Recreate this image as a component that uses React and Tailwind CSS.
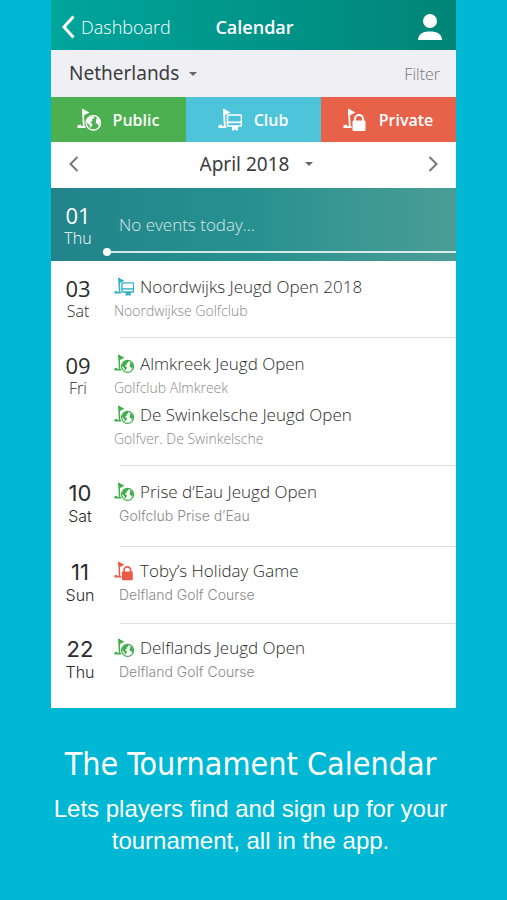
import { useState } from "react";

const EVENTS = [
  {
    date: "03",
    day: "Sat",
    padding: "py-[14px]",
    items: [{ type: "club", title: "Noordwijks Jeugd Open 2018", venue: "Noordwijkse Golfclub" }],
  },
  {
    date: "09",
    day: "Fri",
    padding: "py-[14px]",
    items: [
      { type: "public", title: "Almkreek Jeugd Open", venue: "Golfclub Almkreek" },
      { type: "public", title: "De Swinkelsche Jeugd Open", venue: "Golfver. De Swinkelsche" },
    ],
  },
  {
    date: "10",
    day: "Sat",
    padding: "pt-[14px] pb-[18px]",
    indent: true,
    items: [{ type: "public", title: "Prise d’Eau Jeugd Open", venue: "Golfclub Prise d’Eau" }],
  },
  {
    date: "11",
    day: "Sun",
    padding: "pt-3 pb-4",
    indent: true,
    items: [{ type: "private", title: "Toby’s Holiday Game", venue: "Delfland Golf Course" }],
  },
  {
    date: "22",
    day: "Thu",
    padding: "pt-3 pb-4",
    indent: true,
    items: [{ type: "public", title: "Delflands Jeugd Open", venue: "Delfland Golf Course" }],
  },
];

const iconColors = {
  public: "text-[#3fae49]",
  club: "text-[#35b0c6]",
  private: "text-[#ec5a47]",
};

const tabs = [
  { type: "public", label: "Public", className: "bg-[#4caf50]" },
  { type: "club", label: "Club", className: "bg-[#4dc4da]" },
  { type: "private", label: "Private", className: "bg-[#e8624a]" },
];

function EventIcon({ type, className }) {
  return (
    <svg viewBox="0 0 24 24" className={className} fill="none" stroke="currentColor" aria-hidden="true">
      <path d="M5 0.5L12.5 4.5L6.5 7.5Z" fill="currentColor" stroke="none" />
      <path d="M5.8 1L6.8 18.5" strokeWidth="1.8" />
      <path d="M0.5 18.2L4 17.5M0.5 19H8.5" strokeWidth="1.8" />
      {type === "public" && (
        <>
          <circle cx="16.3" cy="14.8" r="7.2" strokeWidth="1.4" />
          <path
            d="M10 12L12.5 9L16.5 8.2L17.5 9.8L15 11.5L15.5 13L13 14.2L15.5 16L15 18L13 20L12.5 17L9.6 14.5ZM20 9.5L22 11.5L23 15L21.5 18L20.5 16L18.8 15L19 12.5Z"
            fill="currentColor"
            stroke="none"
          />
        </>
      )}
      {type === "club" && (
        <>
          <rect x="9.5" y="7" width="14" height="11" rx="1" strokeWidth="1.7" />
          <path d="M9.5 14.3H23.5" strokeWidth="1.7" />
          <path d="M14 18H20V22.5H18.5L17 21.5L15.5 22.5H14Z" fill="currentColor" stroke="none" />
        </>
      )}
      {type === "private" && (
        <>
          <rect x="9.5" y="12.5" width="13" height="10.5" rx="1.2" fill="currentColor" stroke="none" />
          <path d="M12 13.5V11A4 4 0 0 1 20 11V13.5" strokeWidth="2" />
        </>
      )}
    </svg>
  );
}

function Caret() {
  return (
    <svg viewBox="0 0 8 4" className="w-2 h-1 shrink-0 text-[#666666]" aria-hidden="true">
      <path d="M0 0H8L4 4Z" fill="currentColor" />
    </svg>
  );
}

function DateLabel({ date, day, className }) {
  return (
    <div className={`w-[54px] shrink-0 text-center ${className}`}>
      <p className="text-[22px] leading-[26px]">{date}</p>
      <p className="text-base leading-5 font-light">{day}</p>
    </div>
  );
}

function EventRow({ group }) {
  return (
    <div className={`flex ${group.padding}`}>
      <DateLabel
        date={group.date}
        day={group.day}
        className={group.indent ? "pl-1 font-[Inter,sans-serif] text-[#2b2b2b]" : "text-[#2b2b2b]"}
      />
      <div className="flex flex-col gap-[3px] pl-[9px]">
        {group.items.map((item) => (
          <article key={item.title}>
            <h3 className="flex items-center gap-[6px] text-[17px] leading-6 font-light text-[#2b2b2b]">
              <EventIcon type={item.type} className={`size-5 shrink-0 ${iconColors[item.type]}`} />
              {item.title}
            </h3>
            <p
              className={
                group.indent
                  ? "pl-[5px] font-[Inter,sans-serif] text-sm leading-6 font-light text-[#888888]"
                  : "text-sm leading-6 font-light text-[#888888]"
              }
            >
              {item.venue}
            </p>
          </article>
        ))}
      </div>
    </div>
  );
}

export default function App() {
  const [country, setCountry] = useState("Netherlands");
  const [month, setMonth] = useState("April 2018");

  return (
    <div className="min-h-screen bg-[#00b8d4] font-['Open_Sans',sans-serif]">
      <main className="mx-[51px] bg-white">
        <header className="grid h-[50px] grid-cols-3 items-center bg-linear-to-r from-[#00a59c] to-[#008577] pt-1 pr-2 pl-[10px] text-lg text-white">
          <button type="button" className="flex items-center gap-[6px] font-light">
            <svg viewBox="0 0 14 24" className="w-[14px] h-6" fill="none" stroke="currentColor" aria-hidden="true">
              <path d="M12.5 1.5L3 12L12.5 22.5" strokeWidth="3" />
            </svg>
            Dashboard
          </button>
          <h1 className="text-center font-semibold">Calendar</h1>
          <button type="button" aria-label="Profile" className="mr-[6px] justify-self-end">
            <svg viewBox="0 0 24 26" className="w-6 h-[26px]" fill="currentColor" aria-hidden="true">
              <circle cx="12" cy="7" r="7" />
              <path d="M0 26C0 20 5 17.5 12 17.5S24 20 24 26Z" />
            </svg>
          </button>
        </header>

        <div className="flex h-[47px] items-center justify-between bg-[#efeff4] pr-4 pl-[18px]">
          <label className="flex items-center gap-[10px]">
            <select
              aria-label="Country"
              value={country}
              onChange={(e) => setCountry(e.target.value)}
              className="appearance-none field-sizing-content font-['Noto_Sans',sans-serif] text-[19px] font-normal text-[#3c3c3c]"
            >
              <option>Netherlands</option>
            </select>
            <Caret />
          </label>
          <button type="button" className="text-base font-light text-[#777777]">
            Filter
          </button>
        </div>

        <div className="grid h-[45px] grid-cols-3">
          {tabs.map((tab) => (
            <button
              key={tab.type}
              type="button"
              className={`flex items-center justify-center gap-3 pr-px text-base font-semibold text-white ${tab.className}`}
            >
              <EventIcon type={tab.type} className="size-6 shrink-0" />
              {tab.label}
            </button>
          ))}
        </div>

        <div className="flex h-[46px] items-center justify-between px-[18px] pb-[2px] text-[#777777]">
          <button type="button" aria-label="Previous month">
            <svg viewBox="0 0 10 16" className="w-[10px] h-4" fill="none" stroke="currentColor">
              <path d="M8.5 1L1.5 8L8.5 15" strokeWidth="2" />
            </svg>
          </button>
          <label className="flex items-center gap-4 pl-[6px]">
            <select
              aria-label="Month"
              value={month}
              onChange={(e) => setMonth(e.target.value)}
              className="appearance-none field-sizing-content font-['Noto_Sans',sans-serif] text-[19px] font-normal text-[#3c3c3c]"
            >
              <option>April 2018</option>
            </select>
            <Caret />
          </label>
          <button type="button" aria-label="Next month">
            <svg viewBox="0 0 10 16" className="w-[10px] h-4" fill="none" stroke="currentColor">
              <path d="M1.5 1L8.5 8L1.5 15" strokeWidth="2" />
            </svg>
          </button>
        </div>

        <section className="relative flex h-[73px] bg-linear-to-r from-[#21848b] via-[#27918f] to-[#4a9d97]">
          <DateLabel date="01" day="Thu" className="pt-[14px] text-white" />
          <p className="self-center pl-[14px] text-[17px] font-light text-white/80">No events today...</p>
          <div className="absolute right-0 bottom-[5px] left-[52px] flex items-center">
            <span className="size-2 rounded-full bg-white" />
            <span className="h-[2px] flex-1 bg-white/80" />
          </div>
        </section>

        <ul className="pb-2">
          {EVENTS.map((group, i) => (
            <li key={group.date}>
              {i > 0 && <hr className="ml-[69px] border-[#dedede]" />}
              <EventRow group={group} />
            </li>
          ))}
        </ul>
      </main>

      <footer className="pt-9 pr-[46px] pb-10 pl-10 text-center text-white">
        <h2 className="font-['DejaVu_Sans_Condensed','Noto_Sans',sans-serif] text-[32px] leading-10">
          The Tournament Calendar
        </h2>
        <p className="mt-[9px] font-['Liberation_Sans',sans-serif] text-2xl leading-8">
          Lets players find and sign up for your tournament, all in the app.
        </p>
      </footer>
    </div>
  );
}
